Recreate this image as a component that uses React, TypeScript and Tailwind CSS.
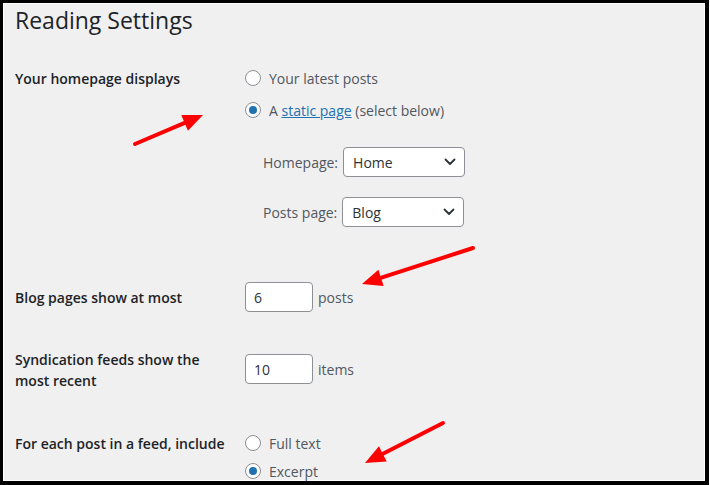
import React from "react";

const font = { fontFamily: '"Open Sans", "Noto Sans", sans-serif' };

// small helper: arrow head polygon from tail/tip points
const arrowHead = (x1: number, y1: number, x2: number, y2: number) => {
  const dx = x2 - x1;
  const dy = y2 - y1;
  const len = Math.sqrt(dx * dx + dy * dy);
  const ux = dx / len;
  const uy = dy / len;
  const bx = x2 - ux * 20;
  const by = y2 - uy * 20;
  const px = -uy * 8.5;
  const py = ux * 8.5;
  return {
    line: { x2: bx + ux * 2, y2: by + uy * 2 },
    points: `${x2},${y2} ${bx + px},${by + py} ${bx - px},${by - py}`,
  };
};

const Arrow = ({ x1, y1, x2, y2 }: { x1: number; y1: number; x2: number; y2: number }) => {
  const h = arrowHead(x1, y1, x2, y2);
  return (
    <g>
      <line x1={x1} y1={y1} x2={h.line.x2} y2={h.line.y2} stroke="#ff0000" strokeWidth={4} strokeLinecap="round" />
      <polygon points={h.points} fill="#ff0000" />
    </g>
  );
};

const Radio = ({ checked, children }: { checked?: boolean; children: React.ReactNode }) => (
  <div className="flex items-center gap-2">
    <span className="flex h-4 w-4 shrink-0 items-center justify-center rounded-full border border-[#8c8f94] bg-white">
      {checked && <span className="h-2 w-2 rounded-full bg-[#2271b1]" />}
    </span>
    <span className="text-[14px] text-[#50575e]">{children}</span>
  </div>
);

const Chevron = () => (
  <svg width="12" height="8" viewBox="0 0 12 8" className="shrink-0">
    <path d="M1.5 1.5 L6 6 L10.5 1.5" fill="none" stroke="#2c3338" strokeWidth="1.8" strokeLinecap="round" strokeLinejoin="round" />
  </svg>
);

const Select = ({ value }: { value: string }) => (
  <div className="flex h-[30px] w-[122px] items-center justify-between rounded-[4px] border border-[#8c8f94] bg-white pl-[9px] pr-[8px]">
    <span className="text-[14px] text-[#2c3338]">{value}</span>
    <Chevron />
  </div>
);

const NumberInput = ({ value, className = "" }: { value: string; className?: string }) => (
  <div className={"flex h-[30px] w-[68px] shrink-0 items-center rounded-[4px] border border-[#8c8f94] bg-white pl-[8px] " + className}>
    <span className="text-[14px] text-[#2c3338]">{value}</span>
  </div>
);

const Label = ({ children, className = "" }: { children: React.ReactNode; className?: string }) => (
  <div className={"w-[230px] shrink-0 text-[14px] font-semibold text-[#1d2327] " + className}>{children}</div>
);

export default function App() {
  return (
    <div className="h-[485px] w-[710px] bg-white" style={font}>
      <div className="relative h-[485px] w-[709px] overflow-hidden border-b-[4px] border-l-[3px] border-r-[4px] border-t-[3px] border-black">
        <div className="h-full w-full border border-white bg-[#f0f0f1] pl-[11px] pt-[1px]">
          <h1 className="text-[23px] leading-[30px] font-normal text-[#1d2327]">Reading Settings</h1>

          {/* homepage displays */}
          <div className="mt-[27px] flex">
            <Label className="flex h-[32px] items-center">Your homepage displays</Label>
            <div className="flex flex-col">
              <div className="flex h-[32px] items-center">
                <Radio>Your latest posts</Radio>
              </div>
              <div className="flex h-[32px] items-center">
                <Radio checked>
                  A <span className="text-[#2271b1] underline">static page</span> (select below)
                </Radio>
              </div>
              <div className="mt-[21px] flex flex-col gap-[20px] pl-[18px]">
                <div className="flex items-center gap-[5px]">
                  <span className="text-[14px] text-[#50575e]">Homepage:</span>
                  <Select value="Home" />
                </div>
                <div className="flex items-center gap-[5px]">
                  <span className="text-[14px] text-[#50575e]">Posts page:</span>
                  <Select value="Blog" />
                </div>
              </div>
            </div>
          </div>

          {/* blog pages */}
          <div className="mt-[55px] flex items-center">
            <Label>Blog pages show at most</Label>
            <NumberInput value="6" />
            <span className="ml-[5px] text-[14px] text-[#50575e]">posts</span>
          </div>

          {/* syndication */}
          <div className="mt-[37px] flex items-start">
            <Label className="leading-[21px]">
              Syndication feeds show the
              <br />
              most recent
            </Label>
            <NumberInput value="10" className="mt-[5px]" />
            <span className="ml-[5px] mt-[5px] flex h-[30px] items-center text-[14px] text-[#50575e]">items</span>
          </div>

          {/* feed */}
          <div className="mt-[38px] flex">
            <Label className="flex h-[28px] items-center">For each post in a feed, include</Label>
            <div className="flex flex-col">
              <div className="flex h-[28px] items-center">
                <Radio>Full text</Radio>
              </div>
              <div className="flex h-[28px] items-center">
                <Radio checked>Excerpt</Radio>
              </div>
            </div>
          </div>
        </div>

        {/* annotation arrows over the screenshot */}
        <svg className="pointer-events-none absolute left-[-3px] top-[-3px]" width="710" height="485">
          <Arrow x1={135} y1={144} x2={203} y2={115} />
          <Arrow x1={473} y1={248} x2={362} y2={284} />
          <Arrow x1={443} y1={423} x2={365} y2={463} />
        </svg>
      </div>
    </div>
  );
}
